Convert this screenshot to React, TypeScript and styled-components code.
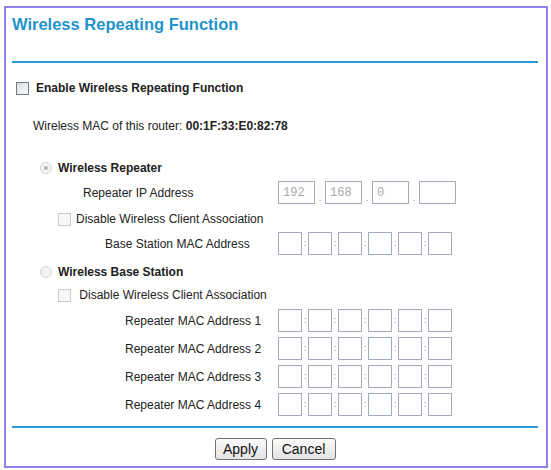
import React from "react";
import styled, { createGlobalStyle } from "styled-components";

const Global = createGlobalStyle`
  html, body { margin: 0; padding: 0; background: #fff; }
  body { font-family: "Liberation Sans", Arial, sans-serif; color: #222; }
`;

const Page = styled.div`
  padding: 6px 0 2px 4px;
`;

const Panel = styled.form`
  box-sizing: border-box;
  width: 544px;
  height: 462px;
  border: 2px solid #8c84e8;
  padding: 0 8px 0 6px;
  display: flex;
  flex-direction: column;
  background: #fff;
`;

const Title = styled.h1`
  margin: 6px 0 0;
  font-size: 16.5px;
  line-height: 20px;
  font-weight: bold;
  color: #1f93cc;
`;

const Rule = styled.div<{ $top: number }>`
  margin-top: ${(p) => p.$top}px;
  height: 2px;
  background: #2a9ad2;
  flex-shrink: 0;
`;

const Row = styled.div<{ $top: number; $indent: number; $h?: number }>`
  display: flex;
  align-items: center;
  margin-top: ${(p) => p.$top}px;
  padding-left: ${(p) => p.$indent}px;
  height: ${(p) => p.$h ?? 18}px;
  font-size: 12px;
  flex-shrink: 0;
`;

const Text = styled.span<{ $bold?: boolean }>`
  font-weight: ${(p) => (p.$bold ? "bold" : "normal")};
  white-space: pre;
`;

const Check = styled.span<{ $active?: boolean }>`
  box-sizing: border-box;
  width: 13px;
  height: 13px;
  border: 1px solid ${(p) => (p.$active ? "#707b8e" : "#c9c9c9")};
  background: ${(p) =>
    p.$active ? "linear-gradient(135deg, #dcdcdc, #fafafa)" : "#f7f7f7"};
  margin-right: ${(p) => (p.$active ? 7 : 5)}px;
  flex-shrink: 0;
`;

const Radio = styled.span<{ $on?: boolean }>`
  box-sizing: border-box;
  width: 12px;
  height: 12px;
  border-radius: 50%;
  border: 1px solid #d2d2d2;
  background: #f3f3f3;
  margin-right: 6px;
  display: flex;
  align-items: center;
  justify-content: center;
  flex-shrink: 0;
  &::after {
    content: "";
    width: 4px;
    height: 4px;
    border-radius: 50%;
    background: ${(p) => (p.$on ? "#b4b4b4" : "transparent")};
  }
`;

const Label = styled.span<{ $indent: number }>`
  box-sizing: border-box;
  width: 266px;
  padding-left: ${(p) => p.$indent}px;
  flex-shrink: 0;
  white-space: nowrap;
`;

const Fields = styled.div`
  display: flex;
  align-items: stretch;
  height: 100%;
`;

const Box = styled.input<{ $w: number }>`
  box-sizing: border-box;
  width: ${(p) => p.$w}px;
  height: 100%;
  margin: 0;
  border: 1px solid #a3abbd;
  background: #fff;
  padding: 0 0 0 4px;
  font-family: "Liberation Mono", "Courier New", monospace;
  font-size: 12px;
  color: #a9a9a9;
  outline: none;
`;

const Sep = styled.span<{ $w: number; $align: string }>`
  width: ${(p) => p.$w}px;
  display: flex;
  justify-content: center;
  align-items: ${(p) => p.$align};
  font-size: 9px;
  line-height: 9px;
  color: #8a8a8a;
  padding-bottom: 1px;
`;

const Buttons = styled.div`
  display: flex;
  justify-content: center;
  gap: 5px;
  margin-top: 10px;
  height: 22px;
`;

const Button = styled.button<{ $w: number }>`
  box-sizing: border-box;
  width: ${(p) => p.$w}px;
  height: 22px;
  padding: 0;
  border: 1px solid #6f7378;
  border-radius: 3px;
  background: linear-gradient(#fbfbfb, #e3e3e3);
  font-family: "Liberation Sans", Arial, sans-serif;
  font-size: 14px;
  color: #111;
`;

function IpFields({ values }: { values: string[] }) {
  return (
    <Fields>
      {values.map((v, i) => (
        <React.Fragment key={i}>
          {i > 0 && <Sep $w={10} $align="flex-end">.</Sep>}
          <Box $w={37} defaultValue={v} />
        </React.Fragment>
      ))}
    </Fields>
  );
}

function MacFields() {
  return (
    <Fields>
      {[0, 1, 2, 3, 4, 5].map((i) => (
        <React.Fragment key={i}>
          {i > 0 && <Sep $w={6} $align="center">:</Sep>}
          <Box $w={24} defaultValue="" />
        </React.Fragment>
      ))}
    </Fields>
  );
}

export default function App() {
  return (
    <Page>
      <Global />
      <Panel onSubmit={(e) => e.preventDefault()}>
        <Title>Wireless Repeating Function</Title>
        <Rule $top={27} />
        <Row $top={16} $indent={4}>
          <Check $active />
          <Text $bold>Enable Wireless Repeating Function</Text>
        </Row>
        <Row $top={20} $indent={21}>
          <Text>Wireless MAC of this router: </Text>
          <Text $bold>00:1F:33:E0:82:78</Text>
        </Row>
        <Row $top={24} $indent={28}>
          <Radio $on />
          <Text $bold>Wireless Repeater</Text>
        </Row>
        <Row $top={4} $indent={0} $h={23}>
          <Label $indent={71}>Repeater IP Address</Label>
          <IpFields values={["192", "168", "0", ""]} />
        </Row>
        <Row $top={6} $indent={46}>
          <Check />
          <Text>Disable Wireless Client Association</Text>
        </Row>
        <Row $top={4} $indent={0} $h={23}>
          <Label $indent={93}>Base Station MAC Address</Label>
          <MacFields />
        </Row>
        <Row $top={8} $indent={28}>
          <Radio />
          <Text $bold>Wireless Base Station</Text>
        </Row>
        <Row $top={5} $indent={46}>
          <Check />
          <Text> Disable Wireless Client Association</Text>
        </Row>
        {[1, 2, 3, 4].map((n) => (
          <Row key={n} $top={5} $indent={0} $h={23}>
            <Label $indent={113}>Repeater MAC Address {n}</Label>
            <MacFields />
          </Row>
        ))}
        <Rule $top={10} />
        <Buttons>
          <Button type="submit" $w={52}>Apply</Button>
          <Button type="button" $w={64}>Cancel</Button>
        </Buttons>
      </Panel>
    </Page>
  );
}
